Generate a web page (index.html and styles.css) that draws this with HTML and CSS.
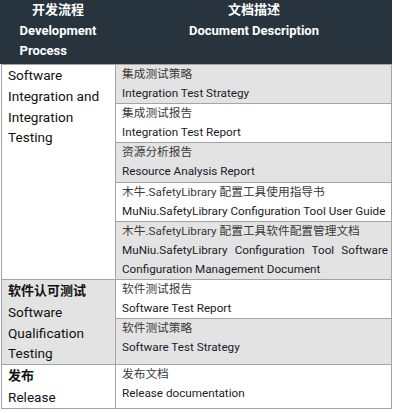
FILE: index.html
```html
<!DOCTYPE html>
<html lang="zh-CN">
<head>
<meta charset="utf-8">
<link rel="stylesheet" href="styles.css">
</head>
<body>
<div class="doc-table">
  <div class="head">
    <div class="hcell hleft">
      <div>开发流程</div>
      <div class="hwrap">Development<br>Process</div>
    </div>
    <div class="hcell hright">
      <div>文档描述</div>
      <div>Document Description</div>
    </div>
  </div>
  <div class="body">
    <div class="group">
      <div class="phase">Software Integration and Integration Testing</div>
      <div class="docs">
        <div class="doc alt"><span class="zh">集成测试策略</span><br>Integration Test Strategy</div>
        <div class="doc"><span class="zh">集成测试报告</span><br>Integration Test Report</div>
        <div class="doc alt"><span class="zh">资源分析报告</span><br>Resource Analysis Report</div>
        <div class="doc"><span class="zh">木牛.SafetyLibrary 配置工具使用指导书</span><br>MuNiu.SafetyLibrary Configuration Tool User Guide</div>
        <div class="doc alt"><span class="zh">木牛.SafetyLibrary 配置工具软件配置管理文档</span><br>MuNiu.SafetyLibrary Configuration Tool Software Configuration Management Document</div>
      </div>
    </div>
    <div class="group">
      <div class="phase alt"><span class="cn">软件认可测试</span><br>Software Qualification Testing</div>
      <div class="docs">
        <div class="doc"><span class="zh">软件测试报告</span><br>Software Test Report</div>
        <div class="doc alt"><span class="zh">软件测试策略</span><br>Software Test Strategy</div>
      </div>
    </div>
    <div class="group">
      <div class="phase"><span class="cn">发布</span><br>Release</div>
      <div class="docs">
        <div class="doc"><span class="zh">发布文档</span><br>Release documentation</div>
      </div>
    </div>
  </div>
</div>
</body>
</html>
```
FILE: styles.css
```css
body {
  margin: 0;
  background: #ffffff;
}
.doc-table {
  width: 392px;
}
.head {
  display: grid;
  grid-template-columns: 116px 1fr;
  height: 64px;
  background: #27333d;
  color: #ffffff;
  font-family: Roboto, "Noto Sans CJK SC", sans-serif;
  font-weight: bold;
  font-size: 13px;
  line-height: 20.5px;
}
.hcell {
  text-align: center;
}
.hwrap {
  display: inline-block;
  text-align: left;
}
.body {
  margin-left: 1px;
  width: 391px;
  box-sizing: border-box;
  border-left: 1px solid #a4a4a4;
  border-right: 1px solid #a4a4a4;
  border-bottom: 1px solid #a4a4a4;
}
.group {
  display: grid;
  grid-template-columns: 114px 1fr;
  border-top: 1px solid #a4a4a4;
}
.phase {
  border-right: 1px solid #a4a4a4;
  padding: 0 4px 0 6px;
  font-family: Roboto, "Noto Sans CJK SC", sans-serif;
  font-size: 13.6px;
  line-height: 20.75px;
  color: #111111;
}
.phase .cn {
  font-weight: bold;
  font-size: 13px;
}
.docs {
  display: flex;
  flex-direction: column;
}
.doc {
  padding: 0 3px 0 6px;
  font-family: Roboto, "Noto Sans CJK SC", sans-serif;
  font-size: 11.7px;
  line-height: 19.1px;
  color: #1a1a2a;
  text-align: justify;
  border-top: 1px solid #a4a4a4;
}
.doc .zh {
  color: #3a3a3a;
}
.doc:first-child {
  border-top: none;
}
.doc:last-child {
  flex: 1;
}
.alt {
  background: #e3e3e3;
}
```
